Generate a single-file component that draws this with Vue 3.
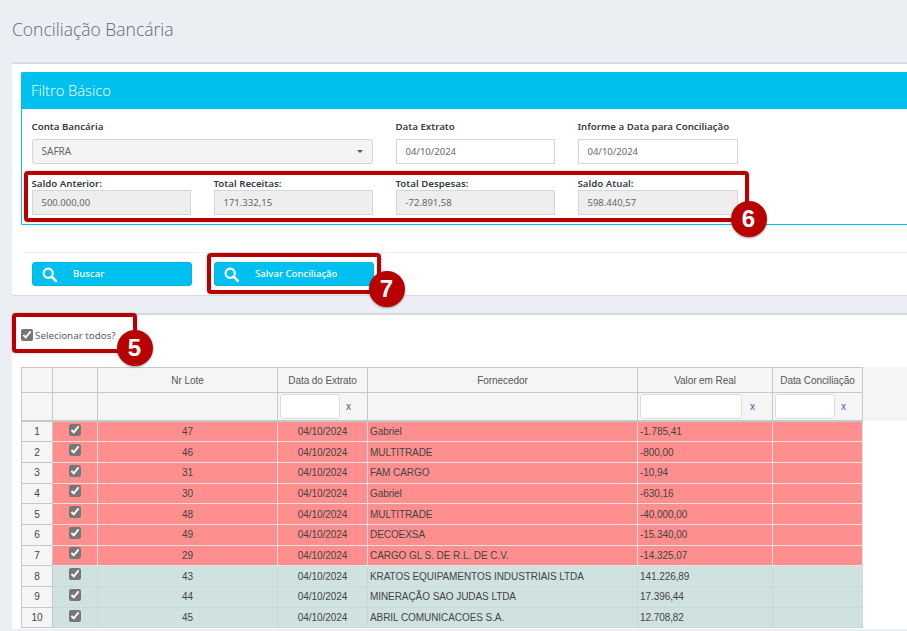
<script setup>
const topFields = [
  { label: 'Conta Bancária', select: true, value: 'SAFRA' },
  { label: 'Data Extrato', value: '04/10/2024' },
  { label: 'Informe a Data para Conciliação', value: '04/10/2024' }
]
const totals = [
  { label: 'Saldo Anterior:', value: '500.000,00' },
  { label: 'Total Receitas:', value: '171.332,15' },
  { label: 'Total Despesas:', value: '-72.891,58' },
  { label: 'Saldo Atual:', value: '598.440,57' }
]
const rows = [
  ['47', 'Gabriel', '-1.785,41', 'neg'],
  ['46', 'MULTITRADE', '-800,00', 'neg'],
  ['31', 'FAM CARGO', '-10,94', 'neg'],
  ['30', 'Gabriel', '-630,16', 'neg'],
  ['48', 'MULTITRADE', '-40.000,00', 'neg'],
  ['49', 'DECOEXSA', '-15.340,00', 'neg'],
  ['29', 'CARGO GL S. DE R.L. DE C.V.', '-14.325,07', 'neg'],
  ['43', 'KRATOS EQUIPAMENTOS INDUSTRIAIS LTDA', '141.226,89', 'pos'],
  ['44', 'MINERAÇÃO SAO JUDAS LTDA', '17.396,44', 'pos'],
  ['45', 'ABRIL COMUNICACOES S.A.', '12.708,82', 'pos']
]
const callouts = [
  { n: 6, cls: 'box-six' },
  { n: 7, cls: 'box-seven' },
  { n: 5, cls: 'box-five' }
]
</script>

<template>
  <div class="page">
    <h1 class="title">Conciliação Bancária</h1>

    <section class="panel filter-panel">
      <div class="filter-box">
        <h2 class="filter-head">Filtro Básico</h2>
        <div class="form-grid">
          <div v-for="f in topFields" :key="f.label" class="field" :class="{ wide: f.select }">
            <label>{{ f.label }}</label>
            <div v-if="f.select" class="input select">{{ f.value }}<span class="caret"></span></div>
            <div v-else class="input">{{ f.value }}</div>
          </div>
          <div v-for="t in totals" :key="t.label" class="field total">
            <label>{{ t.label }}</label>
            <div class="input readonly">{{ t.value }}</div>
          </div>
        </div>
      </div>
      <div class="actions">
        <button v-for="b in ['Buscar', 'Salvar Conciliação']" :key="b" class="btn" type="button">
          <svg width="15" height="15" viewBox="0 0 15 15" fill="none" stroke="#fff" stroke-width="2.2">
            <circle cx="6.2" cy="6.2" r="4.6" />
            <path d="M9.6 9.6 L14 14" stroke-linecap="round" stroke-width="2.6" />
          </svg>
          <span>{{ b }}</span>
        </button>
      </div>
    </section>

    <section class="panel grid-panel">
      <label class="select-all"><input type="checkbox" checked />Selecionar todos?</label>
      <div class="table-wrap">
        <table class="grid">
          <colgroup>
            <col class="c-idx" /><col class="c-chk" /><col class="c-lote" /><col class="c-data" />
            <col class="c-forn" /><col class="c-valor" /><col class="c-data" />
          </colgroup>
          <thead>
            <tr class="h1">
              <th></th><th></th><th>Nr Lote</th><th>Data do Extrato</th><th>Fornecedor</th><th>Valor em Real</th><th>Data Conciliação</th>
            </tr>
            <tr class="h2">
              <th></th><th></th><th></th>
              <th><div class="flt"><input class="f-sm" /><span>x</span></div></th>
              <th></th>
              <th><div class="flt"><input class="f-lg" /><span class="blue wide-gap">x</span></div></th>
              <th><div class="flt"><input class="f-sm" /><span class="blue">x</span></div></th>
            </tr>
          </thead>
          <tbody>
            <tr v-for="(r, i) in rows" :key="r[0]" :class="r[3]">
              <td class="idx">{{ i + 1 }}</td>
              <td class="ctr chk"><input type="checkbox" checked /></td>
              <td class="ctr">{{ r[0] }}</td>
              <td class="ctr">04/10/2024</td>
              <td>{{ r[1] }}</td>
              <td>{{ r[2] }}</td>
              <td></td>
            </tr>
          </tbody>
        </table>
      </div>
    </section>

    <div v-for="c in callouts" :key="c.n" class="callout" :class="c.cls">
      <span class="badge">{{ c.n }}</span>
    </div>
  </div>
</template>

<style>
html, body { margin: 0; overflow: hidden; background: #ebeef3; }
</style>

<style scoped>
.page {
  position: relative;
  width: 907px;
  height: 631px;
  overflow: hidden;
  background: #ebeef3;
  padding-left: 12px;
  box-sizing: border-box;
  font-family: "Noto Sans", sans-serif;
  color: #333;
}
.title {
  margin: 0;
  height: 62px;
  padding-top: 17px;
  box-sizing: border-box;
  font-family: "Open Sans", sans-serif;
  font-weight: 300;
  font-size: 17.5px;
  line-height: 24px;
  color: #5a6b80;
}
.panel {
  background: #fff;
  border-top: 2px solid #d6dae2;
  border-radius: 2px 0 0 2px;
  width: 895px;
}
.filter-panel {
  height: 233px;
  padding: 8px 0 0 9px;
  box-sizing: border-box;
  box-shadow: 0 1px 1px #d6dae2;
}
.filter-box {
  height: 153px;
  box-sizing: border-box;
  border: 1px solid #00c0ef;
  border-right: 0;
  border-radius: 2px 0 0 2px;
}
.filter-head {
  margin: 0;
  height: 36px;
  padding-left: 9px;
  background: #00c0ef;
  color: #fff;
  font-weight: 300;
  font-family: "Open Sans", sans-serif;
  font-size: 14.7px;
  line-height: 34px;
}
.form-grid {
  display: grid;
  grid-template-columns: repeat(4, 182px);
  padding: 11px 0 0 9.5px;
}
.field { display: flex; flex-direction: column; width: 159.5px; height: 57px; }
.field:nth-child(3), .field:nth-child(7) { width: 160.5px; }
.field.wide { grid-column: span 2; width: 341.5px; }
.field.total { height: 49px; }
.field label {
  font-weight: 600;
  font-size: 9.7px;
  line-height: 14px;
  height: 19px;
  color: #333d47;
}
.field.total label { height: 13px; line-height: 13px; }
.input {
  height: 25px;
  box-sizing: border-box;
  border: 1px solid #d2d6de;
  padding-left: 9px;
  font-size: 9.5px;
  line-height: 23px;
  color: #666;
  background: #fff;
}
.select { position: relative; background: #f4f4f4; border-radius: 3px; font-size: 10px; }
.caret {
  position: absolute;
  right: 9px;
  top: 10px;
  border-left: 3px solid transparent;
  border-right: 3px solid transparent;
  border-top: 3px solid #555;
}
.readonly { background: #eee; }
.actions {
  margin-top: 27px;
  border-top: 1px solid #f2f3f5;
  padding: 9px 0 0 11px;
  display: flex;
  gap: 22px;
}
.btn {
  width: 160px;
  height: 24px;
  padding: 0 0 2px 9px;
  border: 1px solid #00b8e6;
  border-radius: 3px;
  background: #00c0ef;
  color: #fff;
  font-family: "Noto Sans", sans-serif;
  font-weight: 500;
  font-size: 9.6px;
  display: flex;
  align-items: center;
  text-align: left;
  box-sizing: border-box;
}
.btn svg { margin-top: 3px; }
.btn span { margin-left: 16px; }
.grid-panel {
  margin-top: 18px;
  height: 316px;
  padding-left: 9px;
  box-sizing: border-box;
}
.select-all {
  display: flex;
  align-items: center;
  height: 14px;
  margin: 13px 0 0 0;
  font-size: 9.8px;
  color: #555f6b;
}
.select-all input { margin: 0 2px 0 0; }
input[type="checkbox"] {
  width: 12px;
  height: 12px;
  accent-color: #767676;
}
.table-wrap {
  margin-top: 25px;
  background: linear-gradient(#f5f5f5 54px, #fff 54px);
  width: 886px;
}
.grid {
  border-collapse: collapse;
  table-layout: fixed;
  width: 841px;
  font-family: "Liberation Sans", sans-serif;
  font-size: 10px;
  letter-spacing: -0.07px;
  color: #444;
}
.c-idx { width: 31px; }
.c-chk { width: 45px; }
.c-lote { width: 180px; }
.c-data { width: 90px; }
.c-forn { width: 270px; }
.c-valor { width: 135px; }
.grid th {
  background: #f5f5f5;
  border: 1px solid #c8c8c8;
  font-weight: 400;
  color: #555;
  padding: 0;
}
.h1 th { height: 24px; }
.h2 th { height: 27px; border-bottom-width: 2px; }
.flt { display: flex; align-items: center; padding-left: 2px; gap: 6px; }
.flt .blue { color: #3b5fa8; }
.flt .wide-gap { margin-left: 2px; }
.flt input {
  height: 25px;
  box-sizing: border-box;
  border: 1px solid #ddd;
  border-radius: 3px;
  background: #fff;
  padding: 0;
}
.f-sm { width: 60px; }
.f-lg { width: 102px; }
.grid td {
  height: 20.7px;
  padding: 0 2px;
  box-sizing: border-box;
  white-space: nowrap;
  overflow: hidden;
}
.neg td { background: #ff8f8f; border: 1px solid #eee0e0; border-left-color: #f3d9d9; }
.pos td { background: #cfe2e0; border: 1px solid #c6d9d7; }
.grid td.idx { background: #f5f5f5; border: 1px solid #c8c8c8; text-align: center; }
.ctr { text-align: center; }
.chk input { display: block; margin: -2px auto 2px; }
.callout {
  position: absolute;
  box-sizing: border-box;
  border: 4px solid #b90000;
  border-radius: 4px;
  box-shadow: 0 0 2px rgba(0, 0, 0, 0.35);
}
.box-six { left: 23.5px; top: 170.5px; width: 725px; height: 51px; }
.box-seven { left: 206.5px; top: 252.5px; width: 174px; height: 41px; }
.box-five { left: 11.5px; top: 313px; width: 125px; height: 40px; }
.badge {
  position: absolute;
  width: 36px;
  height: 36px;
  border-radius: 50%;
  background: #b90000;
  color: #fff;
  font-family: "Liberation Sans", sans-serif;
  font-weight: 700;
  font-size: 24px;
  line-height: 36px;
  text-align: center;
  box-shadow: 0 1px 2px rgba(0, 0, 0, 0.4);
}
.box-six .badge { right: -22px; bottom: -19px; }
.box-seven .badge { right: -28px; bottom: -17px; }
.box-five .badge { right: -20px; bottom: -17px; }
</style>
